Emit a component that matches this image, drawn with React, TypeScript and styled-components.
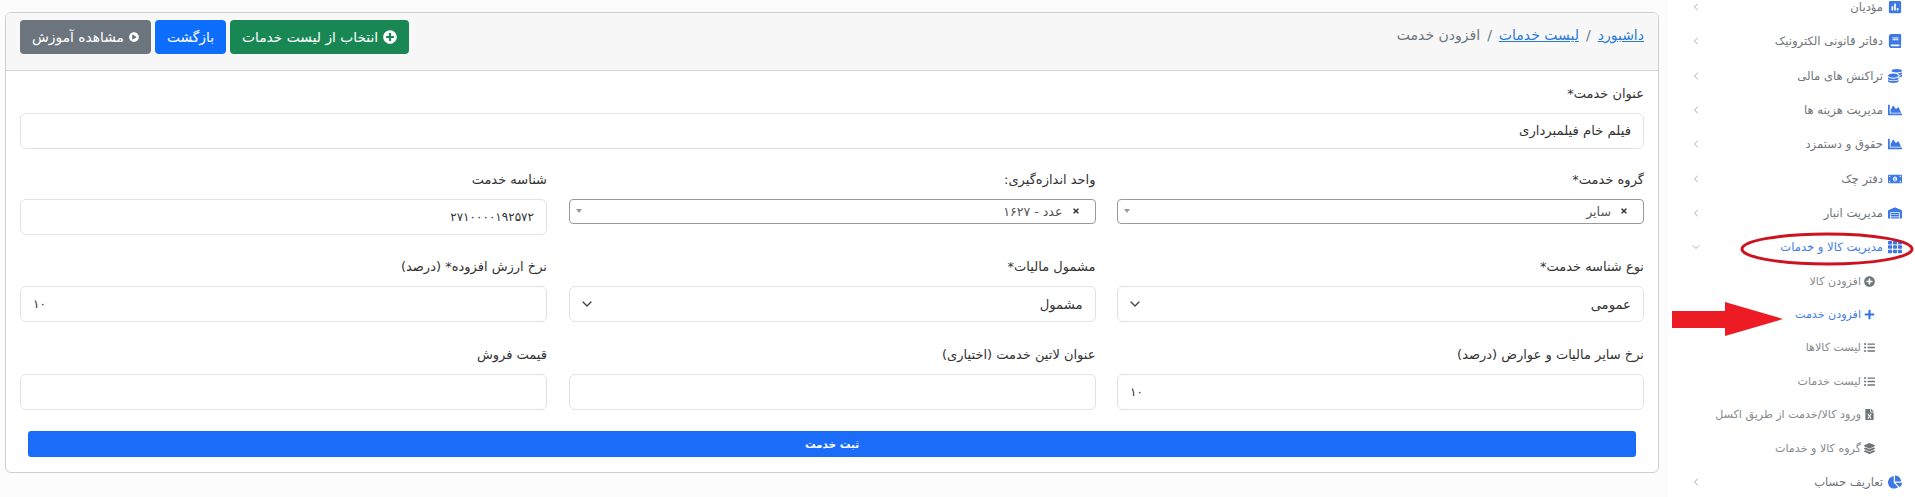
import React from "react";
import styled, { createGlobalStyle } from "styled-components";
import {
  FaPlusCircle, FaPlayCircle, FaChartArea, FaBook, FaCoins, FaMoneyBillAlt, FaWarehouse, FaTh,
  FaPlus, FaListUl, FaFileExcel, FaLayerGroup, FaChartPie, FaPoll, FaTimes,
} from "react-icons/fa";
import { ChevronLeft, ChevronDown } from "lucide-react";

const Global = createGlobalStyle`
  html, body { margin: 0; padding: 0; background: #fff; }
  body { font-family: "DejaVu Sans", "Noto Sans", sans-serif; font-size: 12px; color: #212529; width: 1915px; height: 497px; overflow: hidden; }
  * { box-sizing: border-box; }
`;

const Page = styled.div`
  display: flex;
  position: relative;
  width: 1915px;
  height: 497px;
  overflow: hidden;
`;

const Sidebar = styled.nav`
  width: 247px;
  flex: none;
  background: #fff;
`;

const SideList = styled.ul`
  list-style: none;
  margin: -10px 0 0;
  padding: 0 13px 0 0;
`;

const SideItem = styled.li<{ $active?: boolean }>`
  height: 34.3px;
  display: flex;
  align-items: center;
  gap: 5px;
  font-size: 11.6px;
  color: ${(p) => (p.$active ? "#3f7de8" : "#6f7479")};
  svg.main { color: #3d78e6; font-size: 14px; flex: none; }
`;

const SideLabel = styled.span`
  flex: 1;
`;

const Chevron = styled.span`
  width: 12px;
  margin-left: 22px;
  color: #a9adb2;
  display: flex;
  justify-content: center;
`;

const SubItem = styled.li<{ $active?: boolean }>`
  height: 33.4px;
  display: flex;
  align-items: center;
  gap: 3px;
  padding-right: 27px;
  font-size: 11.1px;
  color: ${(p) => (p.$active ? "#3f7de8" : "#85898e")};
  svg { color: ${(p) => (p.$active ? "#2f72e6" : "#6f7479")}; font-size: 11px; flex: none; }
`;

const Main = styled.main`
  flex: 1;
  background: #fcfcfc;
  padding: 12px 9px 0 5px;
`;

const Card = styled.section`
  height: 461px;
  background: #fff;
  border: 1px solid #cfcfcf;
  border-radius: 6px;
  overflow: hidden;
`;

const CardHeader = styled.header`
  height: 58px;
  background: #f7f7f7;
  border-bottom: 1px solid #d4d4d4;
  padding: 7px 14px;
  display: flex;
  justify-content: space-between;
  align-items: flex-start;
`;

const Crumbs = styled.ol`
  list-style: none;
  margin: 0;
  padding: 7px 0 0;
  display: flex;
  gap: 7px;
  font-size: 14px;
  color: #6c757d;
  a { color: #2a7ad8; text-decoration: underline; }
`;

const Toolbar = styled.div`
  display: flex;
  gap: 4px;
`;

const Btn = styled.button<{ $bg: string }>`
  height: 34px;
  background: ${(p) => p.$bg};
  color: #fff;
  border: 0;
  border-radius: 4px;
  padding: 0 12px;
  display: flex;
  align-items: center;
  gap: 5px;
  font: inherit;
  font-size: 13.8px;
  white-space: nowrap;
  svg { flex: none; }
`;

const CardBody = styled.form`
  padding: 10.5px 14px 0;
  display: flex;
  flex-direction: column;
`;

const Grid = styled.div`
  display: grid;
  grid-template-columns: repeat(3, 1fr);
  column-gap: 21.5px;
`;

const Field = styled.div<{ $full?: boolean }>`
  grid-column: ${(p) => (p.$full ? "1 / -1" : "auto")};
  height: ${(p) => (p.$full ? "86px" : "87.5px")};
  display: flex;
  flex-direction: column;
`;

const Label = styled.label`
  height: 24px;
  line-height: 24px;
  margin-bottom: 7px;
  font-size: 13px;
  color: #333;
`;

const Input = styled.div<{ $digits?: boolean }>`
  height: 36px;
  border: 1px solid #e0e2e5;
  border-radius: 6px;
  background: #fff;
  padding: 0 12px;
  display: flex;
  align-items: center;
  font-size: ${(p) => (p.$digits ? "12px" : "13.2px")};
  color: #333;
  justify-content: flex-start;
`;

const SelectBox = styled(Input)`
  justify-content: space-between;
  svg { color: #444; margin-left: -3px; }
`;

const Select2 = styled.div`
  height: 25px;
  border: 1px solid #9a9a9a;
  border-radius: 4px;
  padding: 0 15px 0 6px;
  display: flex;
  align-items: center;
  justify-content: space-between;
  font-size: 12.6px;
  color: #555;
`;

const Tag = styled.span`
  display: flex;
  align-items: center;
  gap: 9px;
  svg { font-size: 8px; color: #333; }
`;

const Caret = styled.i`
  width: 0;
  height: 0;
  border: 3px solid transparent;
  border-top: 4px solid #999;
  border-bottom: 0;
`;

const Submit = styled.button`
  height: 26px;
  margin: 1px 8px 0;
  background: #1a6cf9;
  color: #fff;
  border: 0;
  border-radius: 3px;
  font: inherit;
  font-size: 10.5px;
  font-weight: 700;
`;

const Overlay = styled.svg`
  position: absolute;
  left: 0;
  top: 0;
  pointer-events: none;
`;

const items: [string, React.ReactNode][] = [
  ["مؤدیان", <FaPoll className="main" />],
  ["دفاتر قانونی الکترونیک", <FaBook className="main" />],
  ["تراکنش های مالی", <FaCoins className="main" />],
  ["مدیریت هزینه ها", <FaChartArea className="main" />],
  ["حقوق و دستمزد", <FaChartArea className="main" />],
  ["دفتر چک", <FaMoneyBillAlt className="main" />],
  ["مدیریت انبار", <FaWarehouse className="main" />],
];

const subs: [string, React.ReactNode, boolean?][] = [
  ["افزودن کالا", <FaPlusCircle />],
  ["افزودن خدمت", <FaPlus />, true],
  ["لیست کالاها", <FaListUl />],
  ["لیست خدمات", <FaListUl />],
  ["ورود کالا/خدمت از طریق اکسل", <FaFileExcel />],
  ["گروه کالا و خدمات", <FaLayerGroup />],
];

export default function App() {
  return (
    <Page dir="rtl">
      <Global />
      <Sidebar>
        <SideList>
          {items.map(([t, i]) => (
            <SideItem key={t}>
              {i}
              <SideLabel>{t}</SideLabel>
              <Chevron><ChevronLeft size={14} strokeWidth={2} /></Chevron>
            </SideItem>
          ))}
          <SideItem $active>
            <FaTh className="main" />
            <SideLabel>مدیریت کالا و خدمات</SideLabel>
            <Chevron><ChevronDown size={14} strokeWidth={2} /></Chevron>
          </SideItem>
          {subs.map(([t, i, a]) => (
            <SubItem key={t} $active={a}>
              {i}
              <span>{t}</span>
            </SubItem>
          ))}
          <SideItem>
            <FaChartPie className="main" />
            <SideLabel>تعاریف حساب</SideLabel>
            <Chevron><ChevronLeft size={14} strokeWidth={2} /></Chevron>
          </SideItem>
        </SideList>
      </Sidebar>
      <Main>
        <Card>
          <CardHeader>
            <Crumbs>
              <li><a href="#">داشبورد</a></li>
              <li>/</li>
              <li><a href="#">لیست خدمات</a></li>
              <li>/</li>
              <li>افزودن خدمت</li>
            </Crumbs>
            <Toolbar>
              <Btn type="button" $bg="#198754"><FaPlusCircle size={14} />انتخاب از لیست خدمات</Btn>
              <Btn type="button" $bg="#0d6efd">بازگشت</Btn>
              <Btn type="button" $bg="#6c757d"><FaPlayCircle size={10} />مشاهده آموزش</Btn>
            </Toolbar>
          </CardHeader>
          <CardBody>
            <Grid>
              <Field $full>
                <Label>عنوان خدمت*</Label>
                <Input>فیلم خام فیلمبرداری</Input>
              </Field>
              <Field>
                <Label>گروه خدمت*</Label>
                <Select2><Tag><FaTimes />سایر</Tag><Caret /></Select2>
              </Field>
              <Field>
                <Label>واحد اندازه‌گیری:</Label>
                <Select2><Tag><FaTimes />عدد - ۱۶۲۷</Tag><Caret /></Select2>
              </Field>
              <Field>
                <Label>شناسه خدمت</Label>
                <Input $digits>۲۷۱۰۰۰۰۱۹۲۵۷۲</Input>
              </Field>
              <Field>
                <Label>نوع شناسه خدمت*</Label>
                <SelectBox>عمومی<ChevronDown size={16} /></SelectBox>
              </Field>
              <Field>
                <Label>مشمول مالیات*</Label>
                <SelectBox>مشمول<ChevronDown size={16} /></SelectBox>
              </Field>
              <Field>
                <Label>نرخ ارزش افزوده* (درصد)</Label>
                <Input dir="ltr" $digits>۱۰</Input>
              </Field>
              <Field>
                <Label>نرخ سایر مالیات و عوارض (درصد)</Label>
                <Input dir="ltr" $digits>۱۰</Input>
              </Field>
              <Field>
                <Label>عنوان لاتین خدمت (اختیاری)</Label>
                <Input />
              </Field>
              <Field>
                <Label>قیمت فروش</Label>
                <Input />
              </Field>
            </Grid>
            <Submit type="button">ثبت خدمت</Submit>
          </CardBody>
        </Card>
      </Main>
      <Overlay width="1915" height="497" viewBox="0 0 1915 497">
        <ellipse cx="1827" cy="249" rx="85" ry="15" fill="none" stroke="#cc1420" strokeWidth="3" />
        <polygon points="1672,311 1725,311 1725,302 1783,319 1725,336 1725,328 1672,328" fill="#ed1c24" />
      </Overlay>
    </Page>
  );
}
